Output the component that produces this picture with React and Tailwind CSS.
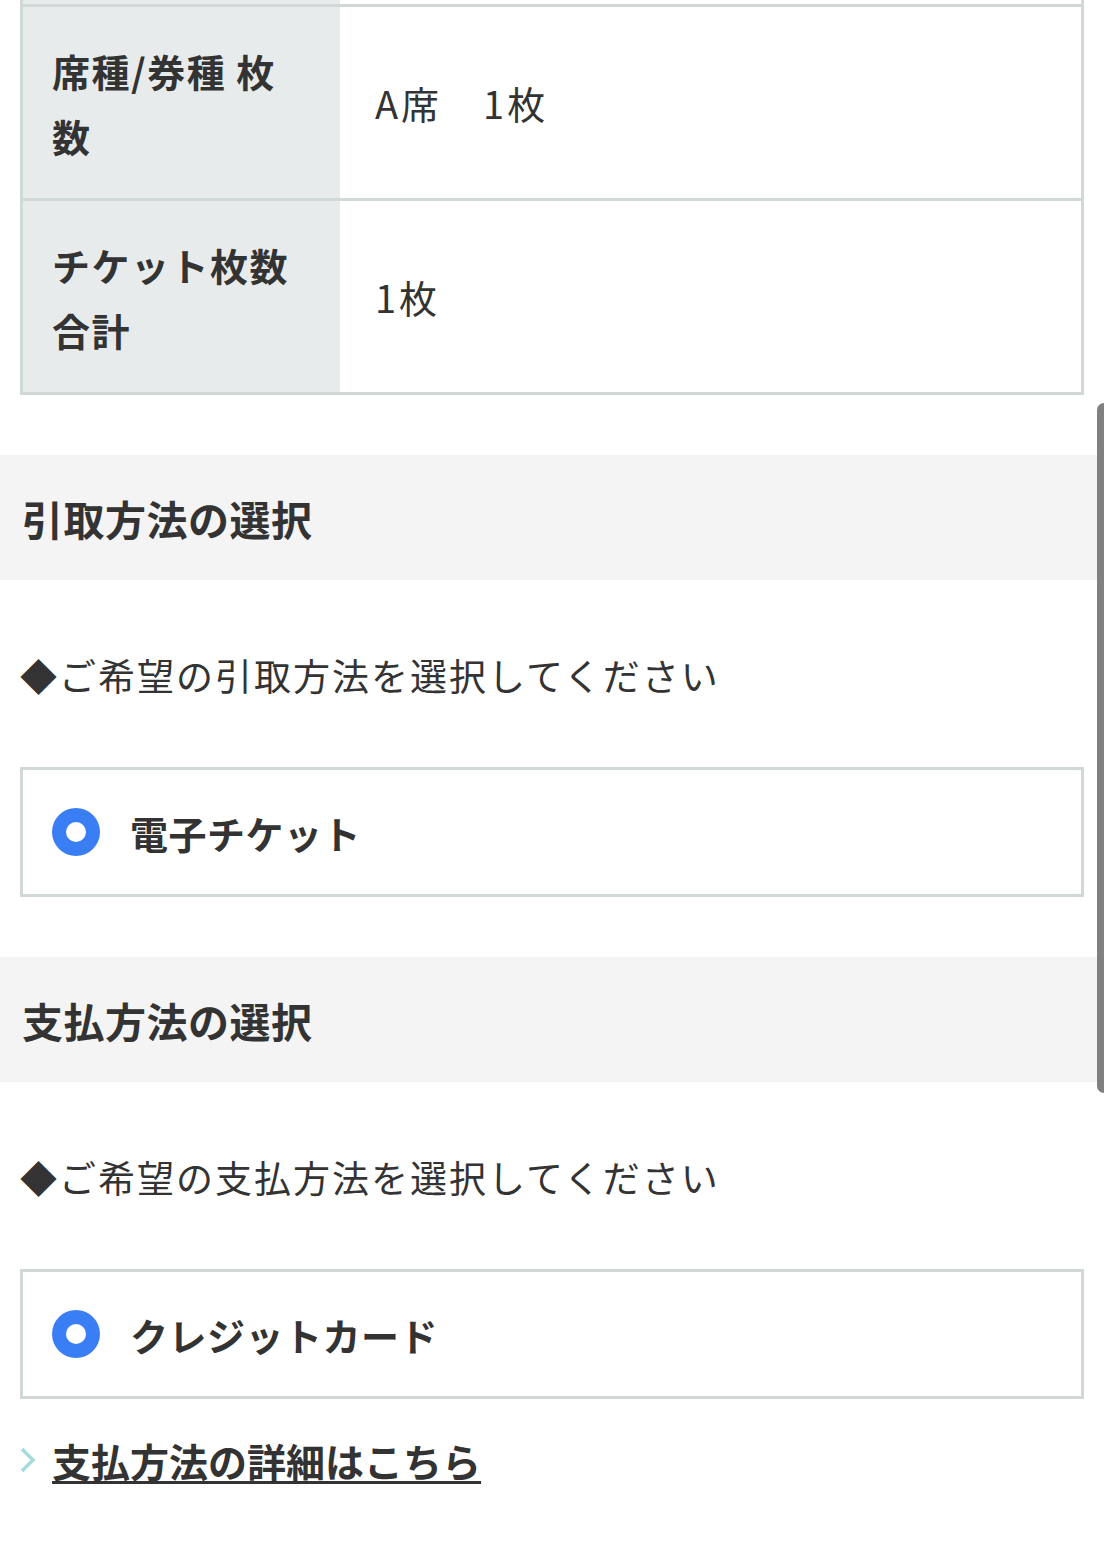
const font = { fontFamily: '"Noto Sans CJK JP", "Noto Sans", sans-serif' }

const rows = [
  { label: '席種/券種 枚数', value: 'A席　1枚' },
  { label: 'チケット枚数合計', value: '1枚' }
]

const SectionHeader = ({ title }) => (
  <div className="mt-[60px] h-[125px] bg-[#f4f4f4] flex items-center px-[22px]">
    <h2 className="text-[41px] leading-[50px] tracking-[0.5px] font-bold text-[#333]">{title}</h2>
  </div>
)

const RadioOption = ({ label }) => (
  <div className="mx-[20px] h-[130px] border-[3px] border-[#d0d9d6] flex items-center pl-[29px]">
    <span className="w-[48px] h-[48px] rounded-full bg-[#3a7ef5] flex items-center justify-center">
      <span className="w-[20px] h-[20px] rounded-full bg-white" />
    </span>
    <span className="ml-[30px] text-[38px] tracking-[0.5px] font-bold text-[#333]">{label}</span>
  </div>
)

const Instruction = ({ text }) => (
  <p className="mt-[70px] mb-[67px] px-[20px] h-[50px] leading-[50px] text-[37px] tracking-[2px] text-[#333] whitespace-nowrap">
    ◆{text}
  </p>
)

const App = () => {
  return (
    <div className="relative w-[1104px] h-[1553px] bg-white overflow-hidden" style={font}>
      {/* Table */}
      <div className="mx-[20px] border-x-[3px] border-b-[3px] border-[#d0d9d6]">
        <div className="flex h-[4px]">
          <div className="w-[317px] bg-[#e8ebec]" />
          <div className="flex-1 bg-white" />
        </div>
        {rows.map((row) => (
          <div key={row.label} className="flex h-[194px] border-t-[3px] border-[#d0d9d6]">
            <div className="w-[317px] bg-[#e8ebec] flex items-center pl-[29px]">
              <p className="w-[250px] text-[38px] tracking-[1.5px] font-bold leading-[65px] text-[#333]">{row.label}</p>
            </div>
            <div className="flex-1 flex items-center pl-[35px]">
              <p className="text-[38px] tracking-[3px] text-[#333]">{row.value}</p>
            </div>
          </div>
        ))}
      </div>

      {/* 引取方法 */}
      <SectionHeader title="引取方法の選択" />
      <Instruction text="ご希望の引取方法を選択してください" />
      <RadioOption label="電子チケット" />

      {/* 支払方法 */}
      <SectionHeader title="支払方法の選択" />
      <Instruction text="ご希望の支払方法を選択してください" />
      <RadioOption label="クレジットカード" />

      {/* Link */}
      <div className="mt-[36px] pl-[19px] flex items-center">
        <svg width="17" height="28" viewBox="0 0 17 28" className="text-[#a6dadb]">
          <polyline points="3,3 14,14 3,25" fill="none" stroke="currentColor" strokeWidth="3.5" />
        </svg>
        <a href="#" className="ml-[16px] text-[39px] leading-[50px] font-bold text-[#333] underline decoration-[3px] underline-offset-[4px]">
          支払方法の詳細はこちら
        </a>
      </div>

      {/* Scrollbar overlay */}
      <div className="absolute right-0 top-[403px] w-[7px] h-[690px] rounded-l-full bg-[#808080]" />
    </div>
  )
}

export default App
